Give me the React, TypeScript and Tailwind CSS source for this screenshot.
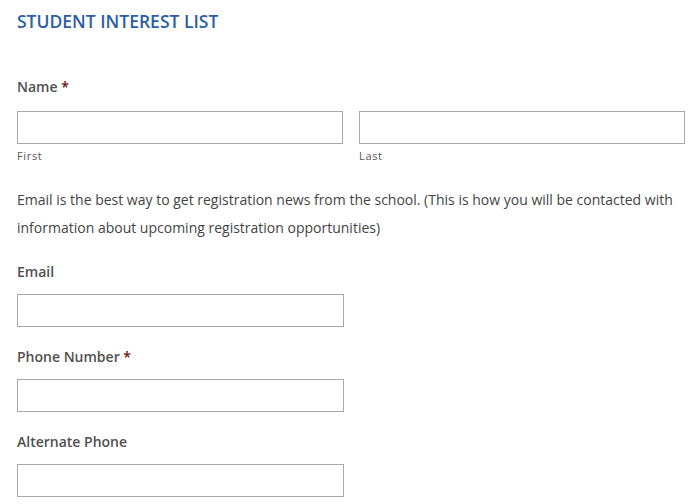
export default function App() {
  const font = { fontFamily: '"Open Sans", "Noto Sans", sans-serif' };

  return (
    <main className="min-h-screen bg-white" style={font}>
      <div className="pt-[9px] pl-[17px] pr-[11px] w-[696px]">
        <h1 className="text-[17.5px] leading-[24px] font-semibold uppercase text-[#2b5ea7]">
          Student Interest List
        </h1>

        {/* Name */}
        <div className="mt-[44px] text-[14px] leading-[20px] font-semibold text-[#505050]">
          Name <span className="text-[#6e1010]">*</span>
        </div>
        <div className="mt-[14px] flex gap-[16px]">
          <div className="flex-1">
            <input className="block w-full h-[33px] border border-[#a9a9a9] bg-white" />
            <div className="mt-[4px] text-[11px] leading-[16px] tracking-[0.06em] text-[#555]">First</div>
          </div>
          <div className="flex-1">
            <input className="block w-full h-[33px] border border-[#a9a9a9] bg-white" />
            <div className="mt-[4px] text-[11px] leading-[16px] tracking-[0.06em] text-[#555]">Last</div>
          </div>
        </div>

        <p className="mt-[22px] text-[14px] leading-[28px] text-[#444]">
          Email is the best way to get registration news from the school. (This is how you will be contacted with
          information about upcoming registration opportunities)
        </p>

        {[
          { label: 'Email', req: false },
          { label: 'Phone Number', req: true },
          { label: 'Alternate Phone', req: false },
        ].map((f) => (
          <div key={f.label}>
            <div className="mt-[20px] text-[14px] leading-[20px] font-semibold text-[#505050]">
              {f.label} {f.req && <span className="text-[#6e1010]">*</span>}
            </div>
            <input className="mt-[12px] block w-[327px] h-[33px] border border-[#a9a9a9] bg-white" />
          </div>
        ))}
      </div>
    </main>
  );
}
